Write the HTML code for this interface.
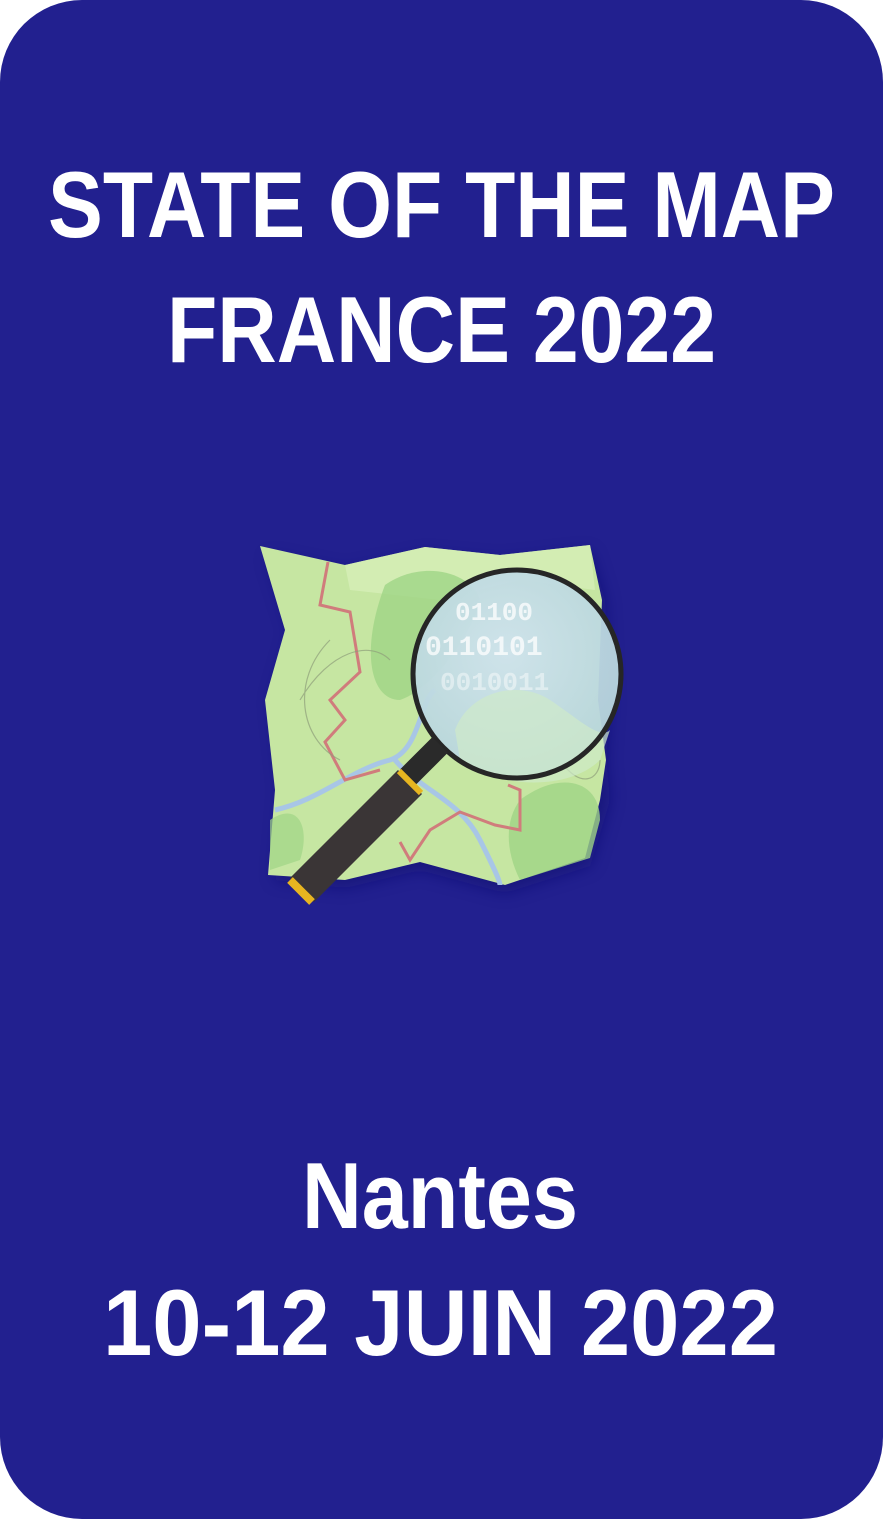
<!DOCTYPE html>
<html><head><meta charset="utf-8"><style>
html,body{margin:0;padding:0;background:#fff;}
body{width:883px;height:1519px;overflow:hidden;}
</style></head><body>
<svg width="883" height="1519" viewBox="0 0 883 1519" xmlns="http://www.w3.org/2000/svg">
<defs>
<radialGradient id="lens" cx="0.45" cy="0.4" r="0.6">
<stop offset="0" stop-color="#cfe3ee"/><stop offset="1" stop-color="#b8d6dc"/>
</radialGradient>
<filter id="sh" x="-20%" y="-20%" width="140%" height="140%"><feGaussianBlur stdDeviation="8"/></filter>
</defs>
<rect x="0" y="0" width="883" height="1519" rx="82" ry="82" fill="#22208f"/>
<g font-family="'Liberation Sans',Arial,sans-serif" font-weight="bold" fill="#fff">
<text x="48" y="237" font-size="94" textLength="787" lengthAdjust="spacingAndGlyphs">STATE OF THE MAP</text>
<text x="167" y="362" font-size="94" textLength="549" lengthAdjust="spacingAndGlyphs">FRANCE 2022</text>
<text x="302" y="1228" font-size="94" textLength="276" lengthAdjust="spacingAndGlyphs">Nantes</text>
<text x="103" y="1355" font-size="94" textLength="675" lengthAdjust="spacingAndGlyphs">10-12 JUIN 2022</text>
</g>
<path d="M275,880 L345,888 L420,870 L505,893 L590,866 L610,800 L606,760 L610,700 L605,600 L590,552 L500,562 L425,555 L345,572 L268,556 L293,632 L273,700 L283,790 Z" fill="#10106a" opacity="0.5" filter="url(#sh)"/>
<path d="M260,546 L345,565 L425,547 L500,555 L590,545 L602,600 L598,700 L606,760 L600,800 L585,858 L505,885 L420,862 L345,880 L268,875 L275,790 L265,700 L285,630 Z" fill="#c6e6a2"/>
<path d="M345,565 L425,547 L500,555 L590,545 L595,590 L520,580 L440,600 L350,590 Z" fill="#d6efb8" opacity="0.8"/>
<path d="M385,585 C420,560 470,570 480,600 C470,640 430,690 400,700 C370,700 360,650 385,585 Z" fill="#9fd486" opacity="0.8"/>
<path d="M520,800 C560,770 600,780 600,820 L590,858 L520,880 C505,850 505,820 520,800 Z" fill="#9fd486" opacity="0.8"/>
<path d="M270,820 C300,800 310,830 300,860 L270,870 Z" fill="#9fd486" opacity="0.7"/>
<path d="M275,810 C320,800 350,770 390,760 C420,750 420,700 435,690 M395,760 C420,790 460,800 480,840 C490,860 500,880 500,885" stroke="#a8c6e6" stroke-width="5" fill="none"/>
<path d="M328,562 L320,605 L350,612 L360,672 L330,700 L345,720 L325,742 L345,780 L380,770 M400,842 L410,860 L430,830 L460,812 L495,825 L520,830 L520,790 L508,785" stroke="#d07c7c" stroke-width="3" fill="none"/>
<path d="M330,640 C290,680 300,740 340,760 M300,700 C330,650 370,640 390,660 M560,760 C580,790 600,780 600,760" stroke="#8f9e7a" stroke-width="1.2" fill="none" opacity="0.7"/>
<circle cx="517" cy="674" r="104" fill="url(#lens)" opacity="0.95"/>
<path d="M455,730 C470,690 520,680 550,700 C580,720 600,740 610,730 L600,760 C570,790 500,790 460,760 Z" fill="#cfe9c9" opacity="0.7"/>
<g font-family="'Liberation Mono',monospace" font-weight="bold" fill="#fff" opacity="0.75">
<text x="455" y="620" font-size="26">01100</text>
<text x="425" y="655" font-size="28">0110101</text>
<text x="440" y="690" font-size="26" opacity="0.6">0010011</text>
</g>
<circle cx="517" cy="674" r="104" fill="none" stroke="#262626" stroke-width="5"/>
<line x1="440" y1="745" x2="408" y2="777" stroke="#2a2a2a" stroke-width="22"/>
<line x1="455" y1="740" x2="430" y2="765" stroke="#2a2a2a" stroke-width="30" opacity="0"/>
<line x1="410" y1="782" x2="302" y2="890" stroke="#3a3536" stroke-width="34"/>
<line x1="399" y1="771" x2="421" y2="793" stroke="#e7b520" stroke-width="6"/>
<line x1="290" y1="880" x2="312" y2="902" stroke="#e7b520" stroke-width="8"/>
</svg>
</body></html>
